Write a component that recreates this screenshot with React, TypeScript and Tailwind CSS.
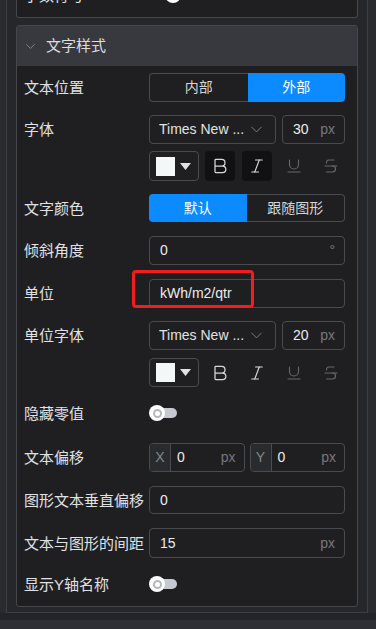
import { ChevronDown, Bold, Italic, Underline, Strikethrough } from 'lucide-react';

function Label({ children }: { children: React.ReactNode }) {
  return (
    <div className="w-[125px] shrink-0 whitespace-nowrap text-[15px] leading-none text-[#e0e1e4]">
      {children}
    </div>
  );
}

function Segmented({ left, right, active }: { left: string; right: string; active: 'left' | 'right' }) {
  const on = 'flex flex-1 items-center justify-center bg-[#0b8bff] text-white';
  return (
    <div className="flex h-full flex-1 text-[14px]">
      {active === 'left' ? (
        <>
          <div className={`${on} rounded-l-[4px]`}>{left}</div>
          <div className="flex flex-1 items-center justify-center rounded-r-[4px] border border-l-0 border-[#4a4b50] text-[#d6d6d6]">
            {right}
          </div>
        </>
      ) : (
        <>
          <div className="flex flex-1 items-center justify-center rounded-l-[4px] border border-r-0 border-[#4a4b50] text-[#d6d6d6]">
            {left}
          </div>
          <div className={`${on} rounded-r-[4px]`}>{right}</div>
        </>
      )}
    </div>
  );
}

function FontSelect({ size }: { size: string }) {
  return (
    <div className="flex h-full flex-1 gap-[6px]">
      <div className="flex w-[127px] items-center rounded-[4px] border border-[#4a4b50] pl-[9px] pr-[9px]">
        <span className="flex-1 text-[14px] text-[#e2e2e2]">Times New ...</span>
        <ChevronDown size={19} strokeWidth={1.1} className="text-[#8a8b8f]" />
      </div>
      <div className="flex flex-1 items-center rounded-[4px] border border-[#4a4b50] pl-[10px] pr-[9px]">
        <span className="flex-1 text-[14px] text-[#ececec]">{size}</span>
        <span className="text-[14px] text-[#77787c]">px</span>
      </div>
    </div>
  );
}

function StyleRow({ pressed }: { pressed: boolean }) {
  const btn = pressed
    ? 'flex h-full w-[30px] items-center justify-center rounded-[4px] bg-[#111113] text-[#d9d9d9]'
    : 'flex h-full w-[30px] items-center justify-center text-[#d9d9d9]';
  return (
    <div className="flex h-full flex-1 items-center gap-[7px]">
      <div className="mr-[-1px] flex h-full w-[50px] items-center gap-[5px] rounded-[4px] border border-[#4a4b50] pl-[6px]">
        <div className="h-[19px] w-[19px] bg-[#f4f7f7]" />
        <svg width="11" height="7" viewBox="0 0 11 7">
          <path d="M0 0h11L5.5 7z" fill="#e2e2e2" />
        </svg>
      </div>
      <div className={btn}>
        <Bold size={20} strokeWidth={1.5} />
      </div>
      <div className={btn}>
        <Italic size={18} strokeWidth={1.5} />
      </div>
      <div className="flex h-full w-[30px] items-center justify-center text-[#67686c]">
        <Underline size={18} strokeWidth={1.5} />
      </div>
      <div className="flex h-full w-[30px] items-center justify-center text-[#67686c]">
        <Strikethrough size={18} strokeWidth={1.5} />
      </div>
    </div>
  );
}

function Toggle() {
  return (
    <div className="relative h-[16px] w-[29px]">
      <div className="absolute left-[10px] top-[3px] h-[10px] w-[18px] rounded-r-full bg-[#c6c9d1]" />
      <div className="absolute left-0 top-0 flex h-[16px] w-[16px] items-center justify-center rounded-full bg-white">
        <div className="h-[9px] w-[9px] rounded-full border-2 border-[#b4b7be]" />
      </div>
    </div>
  );
}

function Input({ value, suffix, children }: { value: string; suffix?: string; children?: React.ReactNode }) {
  return (
    <div className="relative flex h-full flex-1 items-center rounded-[4px] border border-[#4a4b50] pl-[10px] pr-[9px]">
      <span className="flex-1 text-[14px] text-[#ececec]">{value}</span>
      {suffix && <span className="text-[14px] text-[#77787c]">{suffix}</span>}
      {children}
    </div>
  );
}

function AxisInput({ axis }: { axis: string }) {
  return (
    <div className="flex h-full flex-1 overflow-hidden rounded-[4px] border border-[#4a4b50]">
      <div className="flex w-[21px] items-center justify-center border-r border-[#4a4b50] bg-[#2a2b2e] text-[14px] text-[#85868a]">
        {axis}
      </div>
      <div className="flex flex-1 items-center pl-[6px] pr-[8px]">
        <span className="flex-1 text-[14px] text-[#ececec]">0</span>
        <span className="text-[14px] text-[#77787c]">px</span>
      </div>
    </div>
  );
}

export default function App() {
  return (
    <div className="flex h-[629px] w-[376px] flex-col overflow-hidden bg-[#2a2b2f] font-['Liberation_Sans','Noto_Sans_CJK_SC',sans-serif]">
      <div className="ml-[6px] w-[362px] border-x border-b border-[#3e3f44] bg-[#26272b] px-[9px] pb-[5px]">
        {/* previous section, scrolled mostly out of view */}
        <div className="flex h-[18px] flex-col justify-end overflow-hidden rounded-b-[3px] border-x border-b border-[#46474c] bg-[#1f1f22] pb-[8px] pl-[7px]">
          <div className="flex h-[28px] shrink-0 items-center">
            <Label>小数符号</Label>
            <div className="relative ml-[16px] h-[16px] w-[16px] rounded-full bg-white" />
          </div>
        </div>

        <div className="mt-[7px] overflow-hidden rounded-[3px] border border-[#46474c] bg-[#1f1f22]">
          <div className="flex h-[40px] items-center gap-[8px] bg-[#38393e] pl-[6px]">
            <ChevronDown size={15} strokeWidth={1.3} className="text-[#909196]" />
            <span className="text-[15px] text-[#dcdde0]">文字样式</span>
          </div>

          <div className="flex flex-col pb-[8px] pl-[7px] pr-[12px] pt-[7px]">
            <div className="flex h-[29px] items-center">
              <Label>文本位置</Label>
              <Segmented left="内部" right="外部" active="right" />
            </div>
            <div className="mt-[13px] flex h-[29px] items-center">
              <Label>字体</Label>
              <FontSelect size="30" />
            </div>
            <div className="mt-[7px] flex h-[30px] items-center">
              <Label>{''}</Label>
              <StyleRow pressed />
            </div>
            <div className="mt-[13px] flex h-[28px] items-center">
              <Label>文字颜色</Label>
              <Segmented left="默认" right="跟随图形" active="left" />
            </div>
            <div className="mt-[14px] flex h-[29px] items-center">
              <Label>倾斜角度</Label>
              <Input value="0" suffix="°" />
            </div>
            <div className="mt-[14px] flex h-[29px] items-center">
              <Label>单位</Label>
              <Input value="kWh/m2/qtr">
                <div className="pointer-events-none absolute left-[-18px] top-[-10px] h-[38px] w-[122px] rounded-[4px] border-[3px] border-[#f21d1d]" />
              </Input>
            </div>
            <div className="mt-[13px] flex h-[29px] items-center">
              <Label>单位字体</Label>
              <FontSelect size="20" />
            </div>
            <div className="mt-[8px] flex h-[29px] items-center">
              <Label>{''}</Label>
              <StyleRow pressed={false} />
            </div>
            <div className="mt-[12px] flex h-[28px] items-center">
              <Label>隐藏零值</Label>
              <Toggle />
            </div>
            <div className="mt-[16px] flex h-[29px] items-center">
              <Label>文本偏移</Label>
              <div className="flex h-full flex-1 gap-[5px]">
                <AxisInput axis="X" />
                <AxisInput axis="Y" />
              </div>
            </div>
            <div className="mt-[14px] flex h-[28px] items-center">
              <Label>图形文本垂直偏移</Label>
              <Input value="0" />
            </div>
            <div className="mt-[14px] flex h-[30px] items-center">
              <Label>文本与图形的间距</Label>
              <Input value="15" suffix="px" />
            </div>
            <div className="mt-[12px] flex h-[28px] items-center">
              <Label>显示Y轴名称</Label>
              <Toggle />
            </div>
          </div>
        </div>
      </div>
      <div className="h-[7px] bg-[#232427]" />
      <div className="flex-1 bg-[#2e2f34]" />
    </div>
  );
}
